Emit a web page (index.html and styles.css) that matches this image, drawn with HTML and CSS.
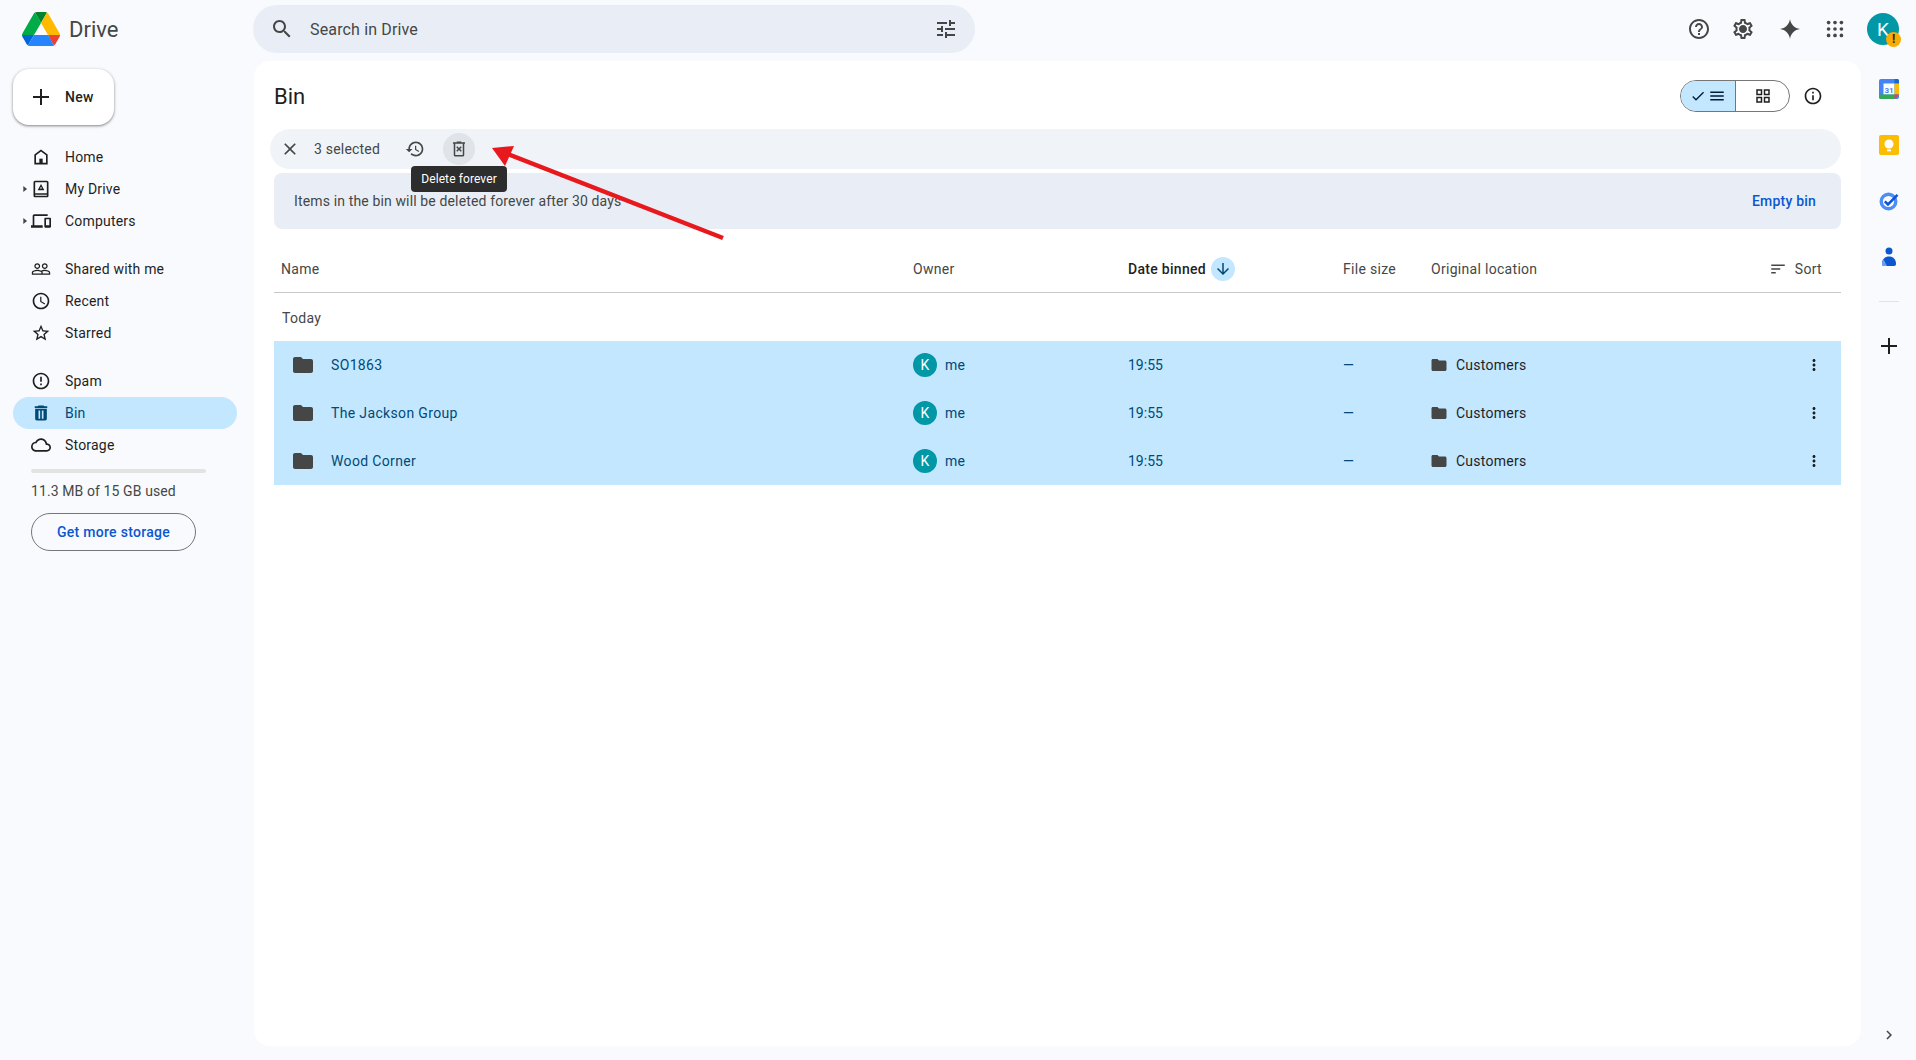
FILE: index.html
```html
<!DOCTYPE html>
<html lang="en">
<head>
    <meta charset="UTF-8">
    <title>Bin - Google Drive</title>
    <link rel="stylesheet" href="styles.css">
</head>
<body>
    <svg class="sprites" width="0" height="0">
        <symbol id="i-folder" viewBox="0 0 24 24"><path d="M10 4H4c-1.1 0-2 .9-2 2v12c0 1.1.9 2 2 2h16c1.1 0 2-.9 2-2V8c0-1.1-.9-2-2-2h-8l-2-2z"/></symbol>
        <symbol id="i-more" viewBox="0 0 24 24"><path d="M12 8c1.1 0 2-.9 2-2s-.9-2-2-2-2 .9-2 2 .9 2 2 2zm0 2c-1.1 0-2 .9-2 2s.9 2 2 2 2-.9 2-2-.9-2-2-2zm0 6c-1.1 0-2 .9-2 2s.9 2 2 2 2-.9 2-2-.9-2-2-2z"/></symbol>
        <symbol id="i-plus" viewBox="0 0 24 24"><path d="M20 13h-7v7h-2v-7H4v-2h7V4h2v7h7z"/></symbol>
        <symbol id="i-caret" viewBox="0 0 24 24"><path d="M8 5l9 7-9 7z"/></symbol>
    </svg>

    <header class="topbar">
        <div class="brand">
            <svg class="brand-logo" viewBox="0 0 87.3 78">
                <path d="m6.6 66.85 3.85 6.65c.8 1.4 1.95 2.5 3.3 3.3l13.75-23.8h-27.5c0 1.55.4 3.1 1.2 4.5z" fill="#0066da"/>
                <path d="m43.65 25-13.75-23.8c-1.35.8-2.5 1.9-3.3 3.3l-25.4 44a9.06 9.06 0 0 0 -1.2 4.5h27.5z" fill="#00ac47"/>
                <path d="m73.55 76.8c1.35-.8 2.5-1.9 3.3-3.3l1.6-2.75 7.65-13.25c.8-1.4 1.2-2.95 1.2-4.5h-27.502l5.852 11.5z" fill="#ea4335"/>
                <path d="m43.65 25 13.75-23.8c-1.35-.8-2.9-1.2-4.5-1.2h-18.5c-1.6 0-3.15.45-4.5 1.2z" fill="#00832d"/>
                <path d="m59.8 53h-32.3l-13.75 23.8c1.35.8 2.9 1.2 4.5 1.2h50.8c1.6 0 3.15-.45 4.5-1.2z" fill="#2684fc"/>
                <path d="m73.4 26.5-12.7-22c-.8-1.4-1.95-2.5-3.3-3.3l-13.75 23.8 16.15 28h27.45c0-1.55-.4-3.1-1.2-4.5z" fill="#ffba00"/>
            </svg>
            <span class="brand-name">Drive</span>
        </div>
        <div class="search">
            <svg class="icon" viewBox="0 0 24 24"><path d="M15.5 14h-.79l-.28-.27C15.41 12.59 16 11.11 16 9.5 16 5.91 13.09 3 9.5 3S3 5.91 3 9.5 5.91 16 9.5 16c1.61 0 3.09-.59 4.23-1.57l.27.28v.79l5 4.99L20.49 19l-4.99-5zm-6 0C7.01 14 5 11.99 5 9.5S7.01 5 9.5 5 14 7.01 14 9.5 11.99 14 9.5 14z"/></svg>
            <span class="search-text">Search in Drive</span>
            <svg class="icon" viewBox="0 0 24 24"><path d="M3 17v2h6v-2H3zM3 5v2h10V5H3zm10 16v-2h8v-2h-8v-2h-2v6h2zM7 9v2H3v2h4v2h2V9H7zm14 4v-2H11v2h10zm-6-4h2V7h4V5h-4V3h-2v6z"/></svg>
        </div>
        <div class="top-actions">
            <svg class="icon top-help" viewBox="0 0 24 24"><path d="M11 18h2v-2h-2v2zm1-16C6.48 2 2 6.48 2 12s4.48 10 10 10 10-4.48 10-10S17.52 2 12 2zm0 18c-4.41 0-8-3.59-8-8s3.59-8 8-8 8 3.59 8 8-3.59 8-8 8zm0-14c-2.21 0-4 1.79-4 4h2c0-1.1.9-2 2-2s2 .9 2 2c0 2-3 1.75-3 5h2c0-2.25 3-2.5 3-5 0-2.21-1.79-4-4-4z"/></svg>
            <svg class="icon top-gear" viewBox="0 0 24 24"><path d="M19.43 12.98c.04-.32.07-.64.07-.98 0-.34-.03-.66-.07-.98l2.11-1.65c.19-.15.24-.42.12-.64l-2-3.46c-.09-.16-.26-.25-.44-.25-.06 0-.12.01-.17.03l-2.49 1c-.52-.4-1.08-.73-1.69-.98l-.38-2.65C14.46 2.18 14.25 2 14 2h-4c-.25 0-.46.18-.49.42l-.38 2.65c-.61.25-1.17.59-1.69.98l-2.49-1c-.06-.02-.12-.03-.18-.03-.17 0-.34.09-.43.25l-2 3.46c-.13.22-.07.49.12.64l2.11 1.65c-.04.32-.07.65-.07.98 0 .33.03.66.07.98l-2.11 1.65c-.19.15-.24.42-.12.64l2 3.46c.09.16.26.25.44.25.06 0 .12-.01.17-.03l2.49-1c.52.4 1.08.73 1.69.98l.38 2.65c.03.24.24.42.49.42h4c.25 0 .46-.18.49-.42l.38-2.65c.61-.25 1.17-.59 1.69-.98l2.49 1c.06.02.12.03.18.03.17 0 .34-.09.43-.25l2-3.46c.12-.22.07-.49-.12-.64l-2.11-1.65zm-1.98-1.71c.04.31.05.52.05.73 0 .21-.02.43-.05.73l-.14 1.13.89.7 1.08.84-.7 1.21-1.27-.51-1.04-.42-.9.68c-.43.32-.84.56-1.25.73l-1.06.43-.16 1.13-.2 1.35h-1.4l-.19-1.35-.16-1.13-1.06-.43c-.43-.18-.83-.41-1.23-.71l-.91-.7-1.06.43-1.27.51-.7-1.21 1.08-.84.89-.7-.14-1.13c-.03-.31-.05-.54-.05-.74s.02-.43.05-.73l.14-1.13-.89-.7-1.08-.84.7-1.21 1.27.51 1.04.42.9-.68c.43-.32.84-.56 1.25-.73l1.06-.43.16-1.13.2-1.35h1.39l.19 1.35.16 1.13 1.06.43c.43.18.83.41 1.23.71l.91.7 1.06-.43 1.27-.51.7 1.21-1.07.85-.89.7.14 1.13zM12 8c-2.21 0-4 1.79-4 4s1.79 4 4 4 4-1.79 4-4-1.79-4-4-4z"/></svg>
            <svg class="icon top-gem" viewBox="0 0 24 24"><path d="M12 2c.7 5.400 4.600 9.300 10 10-5.400.7-9.300 4.600-10 10-.7-5.400-4.600-9.300-10-10 5.400-.7 9.300-4.600 10-10z"/></svg>
            <svg class="icon top-apps" viewBox="0 0 24 24"><circle cx="5" cy="5" r="2"/><circle cx="12" cy="5" r="2"/><circle cx="19" cy="5" r="2"/><circle cx="5" cy="12" r="2"/><circle cx="12" cy="12" r="2"/><circle cx="19" cy="12" r="2"/><circle cx="5" cy="19" r="2"/><circle cx="12" cy="19" r="2"/><circle cx="19" cy="19" r="2"/></svg>
            <div class="account">K<span class="account-badge">!</span></div>
        </div>
    </header>

    <div class="layout">
        <aside class="sidebar">
            <button class="new-btn">
                <svg class="icon new-plus" viewBox="0 0 24 24"><path d="M20 13h-7v7h-2v-7H4v-2h7V4h2v7h7z"/></svg>
                New
            </button>

            <nav class="nav-group first">
                <a class="nav-item">
                    <svg class="icon" viewBox="0 0 24 24"><path d="M12 3L4 9v12h16V9l-8-6zm6 16H6v-9l6-4.500 6 4.500v9z"/><path d="M10 14h4v6h-4z"/></svg>
                    Home
                </a>
                <a class="nav-item">
                    <svg class="caret"><use href="#i-caret"/></svg>
                    <svg class="icon" viewBox="0 0 24 24"><path d="M19 2H5c-1.100 0-2 .9-2 2v16c0 1.100.9 2 2 2h14c1.100 0 2-.9 2-2V4c0-1.100-.9-2-2-2zm0 15H5V4h14v13zM5 19h14v1H5v-1z"/><path d="M12 6l-4 7.500h8L12 6zm0 3.200l1.300 2.300h-2.600L12 9.200z"/></svg>
                    My Drive
                </a>
                <a class="nav-item">
                    <svg class="caret"><use href="#i-caret"/></svg>
                    <svg class="icon" viewBox="0 0 24 24"><path d="M4 6h16V4H4c-1.100 0-2 .9-2 2v11H0v3h14v-3H4V6zm19 2h-6c-.55 0-1 .45-1 1v10c0 .55.45 1 1 1h6c.55 0 1-.45 1-1V9c0-.55-.45-1-1-1zm-1 9h-4v-7h4v7z"/></svg>
                    Computers
                </a>
            </nav>

            <nav class="nav-group">
                <a class="nav-item">
                    <svg class="icon" viewBox="0 0 24 24"><path d="M16.5 13c-1.200 0-3.070.34-4.500 1-1.430-.67-3.300-1-4.500-1C5.330 13 1 14.080 1 16.250V19h22v-2.750c0-2.170-4.330-3.250-6.500-3.250zm-4 4.500h-10v-1.250c0-.54 2.560-1.750 5-1.750s5 1.210 5 1.750v1.250zm9 0H14v-1.250c0-.46-.2-.86-.52-1.220.88-.3 1.960-.53 3.020-.53 2.440 0 5 1.210 5 1.750v1.250zM7.500 12c1.930 0 3.500-1.570 3.500-3.500S9.430 5 7.500 5 4 6.570 4 8.500 5.570 12 7.500 12zm0-5.500c1.100 0 2 .9 2 2s-.9 2-2 2-2-.9-2-2 .9-2 2-2zm9 5.500c1.930 0 3.500-1.570 3.500-3.500S18.430 5 16.500 5 13 6.570 13 8.500s1.570 3.500 3.500 3.500zm0-5.500c1.100 0 2 .9 2 2s-.9 2-2 2-2-.9-2-2 .9-2 2-2z"/></svg>
                    Shared with me
                </a>
                <a class="nav-item">
                    <svg class="icon" viewBox="0 0 24 24"><path d="M11.990 2C6.470 2 2 6.480 2 12s4.470 10 9.990 10C17.520 22 22 17.520 22 12S17.520 2 11.990 2zM12 20c-4.420 0-8-3.580-8-8s3.580-8 8-8 8 3.580 8 8-3.580 8-8 8zm.5-13H11v6l5.250 3.150.75-1.230-4.500-2.670z"/></svg>
                    Recent
                </a>
                <a class="nav-item">
                    <svg class="icon" viewBox="0 0 24 24"><path d="M22 9.240l-7.190-.62L12 2 9.190 8.630 2 9.240l5.460 4.730L5.820 21 12 17.270 18.180 21l-1.630-7.030L22 9.240zM12 15.400l-3.760 2.270 1-4.280-3.320-2.880 4.380-.38L12 6.100l1.710 4.040 4.380.38-3.320 2.880 1 4.280L12 15.400z"/></svg>
                    Starred
                </a>
            </nav>

            <nav class="nav-group">
                <a class="nav-item">
                    <svg class="icon" viewBox="0 0 24 24"><path d="M11 15h2v2h-2zm0-8h2v6h-2zm.99-5C6.470 2 2 6.480 2 12s4.470 10 9.990 10C17.520 22 22 17.520 22 12S17.520 2 11.990 2zM12 20c-4.420 0-8-3.580-8-8s3.580-8 8-8 8 3.580 8 8-3.580 8-8 8z"/></svg>
                    Spam
                </a>
                <a class="nav-item active">
                    <svg class="icon" viewBox="0 0 24 24"><path fill-rule="evenodd" d="M5 19c0 1.100.9 2 2 2h10c1.100 0 2-.9 2-2V7H5v12zm4-10h2v10H9V9zm4 0h2v10h-2V9zM19.500 4H16l-1-1H9L8 4H4.500v2h15V4z"/></svg>
                    Bin
                </a>
                <a class="nav-item">
                    <svg class="icon" viewBox="0 0 24 24"><path d="M19.350 10.040C18.670 6.590 15.640 4 12 4 9.110 4 6.600 5.640 5.350 8.040 2.340 8.360 0 10.910 0 14c0 3.310 2.690 6 6 6h13c2.760 0 5-2.240 5-5 0-2.640-2.050-4.780-4.650-4.960zM19 18H6c-2.210 0-4-1.790-4-4 0-2.050 1.530-3.760 3.560-3.970l1.070-.11.5-.95C8.080 7.140 9.940 6 12 6c2.620 0 4.880 1.860 5.390 4.430l.3 1.500 1.530.11c1.560.1 2.780 1.410 2.780 2.960 0 1.650-1.350 3-3 3z"/></svg>
                    Storage
                </a>
            </nav>

            <div class="storage">
                <div class="storage-bar"></div>
                <div class="storage-text">11.3 MB of 15 GB used</div>
                <button class="storage-btn">Get more storage</button>
            </div>
        </aside>

        <main class="content">
            <div class="title-row">
                <h1>Bin</h1>
                <div class="view-toggle">
                    <div class="view-opt selected">
                        <svg class="icon-sm" viewBox="0 0 24 24"><path d="M9 16.170L4.830 12l-1.420 1.410L9 19 21 7l-1.410-1.410z"/></svg>
                        <svg class="icon-sm" viewBox="0 0 24 24"><path d="M3 18h18v-2H3v2zm0-5h18v-2H3v2zm0-7v2h18V6H3z"/></svg>
                    </div>
                    <div class="view-opt">
                        <svg class="icon-sm" viewBox="0 0 24 24"><path d="M3 3h8v8H3V3zm2 2v4h4V5H5zm8-2h8v8h-8V3zm2 2v4h4V5h-4zM3 13h8v8H3v-8zm2 2v4h4v-4H5zm8-2h8v8h-8v-8zm2 2v4h4v-4h-4z"/></svg>
                    </div>
                </div>
                <svg class="icon info-btn" viewBox="0 0 24 24"><path d="M11 7h2v2h-2zm0 4h2v6h-2zm1-9C6.480 2 2 6.480 2 12s4.480 10 10 10 10-4.480 10-10S17.520 2 12 2zm0 18c-4.410 0-8-3.590-8-8s3.590-8 8-8 8 3.590 8 8-3.590 8-8 8z"/></svg>
            </div>

            <div class="select-bar">
                <svg class="icon select-close" viewBox="0 0 24 24"><path d="M19 6.410L17.590 5 12 10.590 6.410 5 5 6.410 10.590 12 5 17.590 6.410 19 12 13.410 17.590 19 19 17.590 13.410 12z"/></svg>
                <span class="select-count">3 selected</span>
                <div class="select-btn">
                    <svg class="icon-md" viewBox="0 0 24 24"><path d="M13 3c-4.970 0-9 4.030-9 9H1l3.890 3.890.07.14L9 12H6c0-3.870 3.130-7 7-7s7 3.130 7 7-3.130 7-7 7c-1.930 0-3.680-.79-4.940-2.060l-1.420 1.420C8.270 19.990 10.510 21 13 21c4.970 0 9-4.030 9-9s-4.030-9-9-9zm-1 5v5l4.280 2.540.72-1.210-3.500-2.080V8H12z"/></svg>
                </div>
                <div class="select-btn hover">
                    <svg class="icon-del" viewBox="0 0 24 24"><path d="M15 3V2H9v1H4v2h1v15c0 1.100.9 2 2 2h10c1.100 0 2-.9 2-2V5h1V3h-5zm2 17H7V5h10v15z"/><path d="M14.300 8.300L12 10.600 9.700 8.300l-1.400 1.400 2.300 2.300-2.300 2.300 1.400 1.400 2.300-2.300 2.300 2.300 1.400-1.400-2.300-2.300 2.300-2.300z"/></svg>
                </div>
            </div>

            <div class="notice">
                <span>Items in the bin will be deleted forever after 30 days</span>
                <a class="notice-link">Empty bin</a>
            </div>

            <div class="file-list">
                <div class="list-row list-head">
                    <div>Name</div>
                    <div>Owner</div>
                    <div class="sorted">Date binned
                        <span class="sort-arrow">
                            <svg class="icon-sm" viewBox="0 0 24 24"><path d="M20 12l-1.410-1.410L13 16.170V4h-2v12.170l-5.580-5.590L4 12l8 8 8-8z"/></svg>
                        </span>
                    </div>
                    <div>File size</div>
                    <div>Original location</div>
                    <div class="sort-btn">
                        <svg class="icon-del" viewBox="0 0 24 24"><path d="M3 18h6v-2H3v2zM3 6v2h18V6H3zm0 7h12v-2H3v2z"/></svg>
                        Sort
                    </div>
                </div>

                <div class="group-label">Today</div>

                <div class="list-row file-row">
                    <div class="file-name"><svg class="folder-lg"><use href="#i-folder"/></svg>SO1863</div>
                    <div class="owner"><span class="owner-pic">K</span>me</div>
                    <div class="file-time">19:55</div>
                    <div class="dash">—</div>
                    <div class="location"><svg class="folder-sm"><use href="#i-folder"/></svg>Customers</div>
                    <svg class="row-more"><use href="#i-more"/></svg>
                </div>
                <div class="list-row file-row">
                    <div class="file-name"><svg class="folder-lg"><use href="#i-folder"/></svg>The Jackson Group</div>
                    <div class="owner"><span class="owner-pic">K</span>me</div>
                    <div class="file-time">19:55</div>
                    <div class="dash">—</div>
                    <div class="location"><svg class="folder-sm"><use href="#i-folder"/></svg>Customers</div>
                    <svg class="row-more"><use href="#i-more"/></svg>
                </div>
                <div class="list-row file-row">
                    <div class="file-name"><svg class="folder-lg"><use href="#i-folder"/></svg>Wood Corner</div>
                    <div class="owner"><span class="owner-pic">K</span>me</div>
                    <div class="file-time">19:55</div>
                    <div class="dash">—</div>
                    <div class="location"><svg class="folder-sm"><use href="#i-folder"/></svg>Customers</div>
                    <svg class="row-more"><use href="#i-more"/></svg>
                </div>
            </div>

            <div class="tooltip">Delete forever</div>

            <!-- annotation arrow drawn over the page -->
            <svg class="annotation" viewBox="484 140 250 110">
                <path d="M723 238 505 153" stroke="#e8191c" stroke-width="4.500" fill="none"/>
                <path d="M492 148 514 146 505 166z" fill="#e8191c"/>
            </svg>
        </main>

        <aside class="side-panel">
            <svg class="panel-app" viewBox="0 0 20 20">
                <rect x="0" y="0" width="20" height="20" rx="2" fill="#4285f4"/>
                <rect x="4.500" y="4.500" width="11" height="11" fill="#fff"/>
                <path d="M15.500 0H18a2 2 0 0 1 2 2v2.500h-4.500z" fill="#1967d2"/>
                <path d="M15.500 4.500H20v11h-4.500z" fill="#fbbc04"/>
                <path d="M0 15.500h15.500V20H2a2 2 0 0 1-2-2z" fill="#34a853"/>
                <path d="M15.500 15.500H20L15.500 20z" fill="#ea4335"/>
                <text x="10" y="13.500" class="cal-text">31</text>
            </svg>
            <svg class="panel-app" viewBox="0 0 20 20">
                <rect width="20" height="20" rx="2" fill="#fbbc04"/>
                <circle cx="10" cy="9" r="4.500" fill="#fff"/>
                <rect x="8" y="14.500" width="4" height="1.800" fill="#fff"/>
            </svg>
            <svg class="panel-app" viewBox="0 0 20 20">
                <circle cx="9.500" cy="10.500" r="7.300" fill="none" stroke="#4c8df6" stroke-width="3.400"/>
                <path d="M5.800 10.300l3.200 3.200L18.500 3.800" fill="none" stroke="#0b57d0" stroke-width="2.600"/>
            </svg>
            <svg class="panel-app" viewBox="0 0 20 20">
                <circle cx="10" cy="4" r="3.500" fill="#0b57d0"/>
                <path d="M3 17c0-5 3-7.500 7-7.500s7 2.500 7 7.500c0 1-.6 2-2 2H5c-1.400 0-2-1-2-2z" fill="#0b57d0"/>
                <path d="M3 17c0-2 .5-3.500 1.500-4.800L8 19H5c-1.400 0-2-1-2-2z" fill="#6d9ef2"/>
            </svg>
            <div class="panel-divider"></div>
            <svg class="panel-plus"><use href="#i-plus"/></svg>
            <svg class="panel-chevron" viewBox="0 0 24 24"><path d="M10 6L8.590 7.410 13.170 12l-4.580 4.590L10 18l6-6z"/></svg>
        </aside>
    </div>
</body>
</html>
```

FILE: styles.css
```css
* {
    box-sizing: border-box;
}

html, body {
    height: 100%;
}

body {
    font-family: Roboto, "Noto Sans", Arial, sans-serif;
    font-size: 14px;
    letter-spacing: 0.2px;
    color: #1f1f1f;
    background: #f8fafd;
    margin: 0;
    overflow: hidden;
}

.sprites {
    position: absolute;
}

.icon {
    width: 20px;
    height: 20px;
    fill: #1f1f1f;
    flex: none;
}

.icon-sm {
    width: 18px;
    height: 18px;
    fill: currentColor;
    flex: none;
}

.icon-md {
    width: 20px;
    height: 20px;
    fill: #444746;
    flex: none;
}

.icon-del {
    width: 18px;
    height: 18px;
    fill: #444746;
    flex: none;
}

/* top bar */
.topbar {
    height: 61px;
    display: flex;
    align-items: flex-start;
}

.brand {
    width: 253px;
    height: 58px;
    padding-left: 22px;
    display: flex;
    align-items: center;
    flex: none;
}

.brand-logo {
    width: 38px;
    height: 34px;
}

.brand-name {
    margin-left: 9px;
    font-size: 22px;
    letter-spacing: 0;
    color: #444746;
}

.search {
    width: 722px;
    height: 48px;
    margin-top: 5px;
    padding: 0 17px;
    background: #e9eef6;
    border-radius: 24px;
    display: flex;
    align-items: center;
    flex: none;
}

.search .icon {
    width: 24px;
    height: 24px;
    fill: #444746;
}

.search-text {
    flex: 1;
    margin-left: 16px;
    font-size: 16px;
    letter-spacing: 0.15px;
    color: #444746;
}

.top-actions {
    margin-left: auto;
    height: 58px;
    padding-right: 17px;
    display: flex;
    align-items: center;
}

.top-actions .icon {
    fill: #444746;
    width: 24px;
    height: 24px;
}

.top-gear {
    margin-left: 20px;
}

.top-gem {
    margin-left: 23px;
}

.top-apps {
    margin-left: 22px;
}

.top-actions .top-apps {
    width: 22px;
    height: 22px;
}

.account {
    position: relative;
    width: 32px;
    height: 32px;
    margin-left: 21px;
    border-radius: 50%;
    background: #0097a7;
    color: #fff;
    font-size: 19px;
    letter-spacing: 0;
    display: flex;
    align-items: center;
    justify-content: center;
}

.account-badge {
    position: absolute;
    right: -2px;
    bottom: -2px;
    width: 15px;
    height: 15px;
    border-radius: 50%;
    background: #f9ab00;
    color: #1f1f1f;
    font-size: 12px;
    font-weight: 700;
    line-height: 15px;
    text-align: center;
}

/* page columns */
.layout {
    display: flex;
    height: 985px;
}

.sidebar {
    width: 254px;
    flex: none;
    padding-top: 8px;
}

.new-btn {
    width: 101px;
    height: 56px;
    margin-left: 13px;
    padding: 0 0 0 16px;
    background: #fff;
    border: none;
    border-radius: 16px;
    box-shadow: 0 1px 2px rgba(0,0,0,0.3), 0 1px 3px 1px rgba(0,0,0,0.15);
    font-family: inherit;
    font-size: 14px;
    font-weight: 500;
    letter-spacing: 0.3px;
    color: #1f1f1f;
    display: flex;
    align-items: center;
    gap: 12px;
}

.new-plus {
    width: 24px;
    height: 24px;
}

.nav-group {
    margin-top: 16px;
}

.nav-item {
    position: relative;
    width: 224px;
    height: 32px;
    margin-left: 13px;
    padding-left: 18px;
    border-radius: 16px;
    display: flex;
    align-items: center;
    gap: 14px;
    color: #1f1f1f;
}

.nav-item.active {
    background: #c2e7ff;
    color: #004a77;
}

.nav-item.active .icon {
    fill: #004a77;
}

.caret {
    position: absolute;
    left: 7px;
    top: 11px;
    width: 10px;
    height: 10px;
    fill: #444746;
}

.storage {
    padding-left: 31px;
    margin-top: 8px;
}

.storage-bar {
    width: 175px;
    height: 4px;
    margin-top: 8px;
    border-radius: 2px;
    background: #e3e3e3;
}

.storage-text {
    margin-top: 10px;
    color: #444746;
    letter-spacing: 0.1px;
}

.storage-btn {
    display: block;
    width: 165px;
    height: 38px;
    margin-top: 14px;
    background: transparent;
    border: 1px solid #747775;
    border-radius: 19px;
    font-family: inherit;
    font-size: 14px;
    font-weight: 500;
    letter-spacing: 0.3px;
    color: #0b57d0;
}

/* main card */
.content {
    position: relative;
    width: 1607px;
    flex: none;
    padding: 0 20px 0 16px;
    background: #fff;
    border-radius: 16px;
}

.title-row {
    height: 68px;
    padding: 2px 0 0 4px;
    display: flex;
    align-items: center;
}

h1 {
    margin: 0;
    font-size: 22px;
    font-weight: 400;
    letter-spacing: 0;
    flex: 1;
}

.view-toggle {
    width: 110px;
    height: 32px;
    margin-right: 13px;
    border: 1px solid #747775;
    border-radius: 16px;
    overflow: hidden;
    display: flex;
}

.view-opt {
    flex: 1;
    display: flex;
    align-items: center;
    justify-content: center;
    color: #1f1f1f;
}

.view-opt.selected {
    flex: none;
    width: 55px;
    background: #c2e7ff;
    color: #001d35;
    border-right: 1px solid #747775;
}

.view-opt.selected .icon-sm:first-child {
    margin-right: 2px;
    width: 16px;
    height: 16px;
}

.info-btn {
    margin-right: 18px;
}

.select-bar {
    height: 40px;
    background: #f0f4f9;
    border-radius: 20px;
    display: flex;
    align-items: center;
    padding-left: 10px;
}

.select-close {
    fill: #444746;
}

.select-count {
    margin-left: 14px;
    width: 85px;
    color: #444746;
}

.select-btn {
    width: 32px;
    height: 32px;
    margin-right: 12px;
    border-radius: 50%;
    display: flex;
    align-items: center;
    justify-content: center;
}

.select-btn.hover {
    background: #e0e3e7;
}

.notice {
    height: 56px;
    margin: 4px 0 0 4px;
    padding: 0 25px 0 20px;
    background: #e9eef6;
    border-radius: 8px;
    display: flex;
    align-items: center;
    justify-content: space-between;
    color: #444746;
    letter-spacing: 0.14px;
}

.notice-link {
    color: #0b57d0;
    font-weight: 500;
    letter-spacing: 0.2px;
}

.file-list {
    margin-left: 4px;
}

.list-row {
    display: grid;
    grid-template-columns: 639px 215px 215px 88px 1fr 64px;
    align-items: center;
}

.list-head {
    height: 64px;
    padding: 16px 0 0 7px;
    grid-template-columns: 632px 215px 215px 88px 1fr 64px;
    border-bottom: 1px solid #c7c7c7;
    color: #444746;
    letter-spacing: 0.3px;
}

.list-head > div {
    display: flex;
    align-items: center;
}

.sorted {
    color: #1f1f1f;
    font-weight: 500;
    gap: 5px;
}

.sort-arrow {
    width: 24px;
    height: 24px;
    border-radius: 50%;
    background: #c2e7ff;
    color: #004a77;
    display: flex;
    align-items: center;
    justify-content: center;
}

.sort-btn {
    position: relative;
    margin-left: -30px;
    gap: 8px;
    justify-content: flex-end;
    margin-right: 19px;
}

.group-label {
    height: 48px;
    padding: 2px 0 0 8px;
    display: flex;
    align-items: center;
    color: #444746;
    letter-spacing: 0.3px;
}

.file-row {
    height: 48px;
    background: #c2e7ff;
    color: #004a77;
}

.file-name {
    display: flex;
    align-items: center;
    padding-left: 17px;
    letter-spacing: 0.35px;
}

.folder-lg {
    width: 24px;
    height: 24px;
    margin-right: 16px;
    fill: #444746;
}

.owner {
    display: flex;
    align-items: center;
    gap: 8px;
}

.owner-pic {
    width: 24px;
    height: 24px;
    border-radius: 50%;
    background: #0097a7;
    color: #fff;
    font-size: 14px;
    line-height: 24px;
    text-align: center;
    letter-spacing: 0;
}

.file-time {
    letter-spacing: 0;
}

.dash {
    color: #004a77;
}

.location {
    display: flex;
    align-items: center;
    color: #1f1f1f;
    letter-spacing: 0.25px;
}

.folder-sm {
    width: 18px;
    height: 18px;
    margin-right: 8px;
    margin-left: -1px;
    fill: #444746;
}

.row-more {
    width: 18px;
    height: 18px;
    justify-self: end;
    margin-right: 18px;
    fill: #1f1f1f;
}

.tooltip {
    position: absolute;
    left: 157px;
    top: 105px;
    width: 96px;
    height: 26px;
    background: #2d2d2d;
    border-radius: 4px;
    color: #fff;
    font-size: 12px;
    letter-spacing: 0.1px;
    line-height: 26px;
    text-align: center;
}

.annotation {
    position: absolute;
    left: 230px;
    top: 79px;
    width: 250px;
    height: 110px;
}

/* right rail */
.side-panel {
    flex: 1;
    position: relative;
    display: flex;
    flex-direction: column;
    align-items: center;
    padding: 18px 0 0 0;
}

.panel-app {
    width: 20px;
    height: 20px;
    margin-bottom: 36px;
}

.cal-text {
    font-family: Roboto, sans-serif;
    font-size: 8px;
    font-weight: 700;
    letter-spacing: 0;
    text-anchor: middle;
    fill: #4285f4;
}

.panel-divider {
    width: 20px;
    height: 1px;
    margin-top: -2px;
    background: #e3e3e3;
}

.panel-plus {
    width: 24px;
    height: 24px;
    margin-top: 32px;
    fill: #1f1f1f;
}

.panel-chevron {
    margin-top: auto;
    width: 18px;
    height: 18px;
    margin-bottom: 2px;
    fill: #444746;
}
```
